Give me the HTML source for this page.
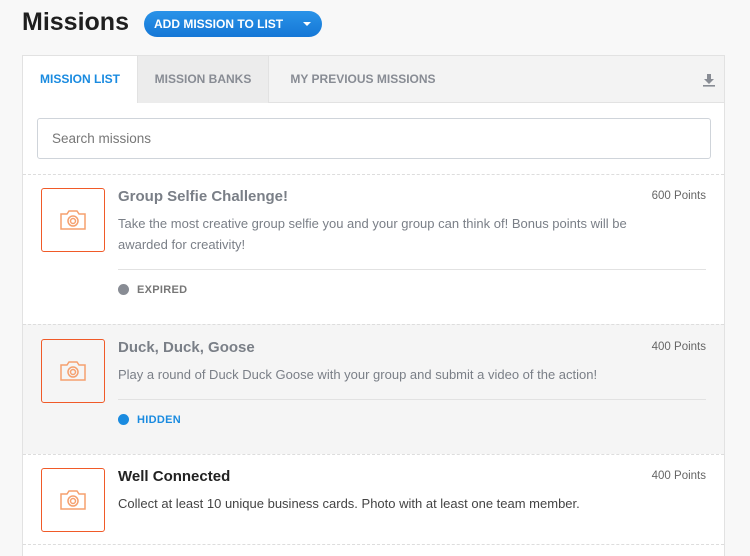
<!DOCTYPE html>
<html><head><style>
*{box-sizing:border-box;margin:0;padding:0}
html,body{width:750px;height:556px;overflow:hidden}
body{background:#f8f8f8;font-family:"Liberation Sans",sans-serif;position:relative}
h1{position:absolute;left:22px;top:8px;font-size:25px;font-weight:bold;color:#1f1f1f}
.btn{position:absolute;left:144px;top:11px;width:178px;height:26px;border-radius:13px;background:linear-gradient(#2a93e8,#1577d6);color:#fff;font-size:12px;font-weight:bold;line-height:26px;padding-left:10px}
.btn:after{content:"";position:absolute;right:11px;top:11px;border:4px solid transparent;border-top:4px solid #fff;border-bottom:0}
.panel{position:absolute;left:22px;top:55px;width:703px;height:501px;background:#fff;border:1px solid #e2e2e2;border-bottom:0;overflow:hidden}
.tabs{height:47px;background:#f3f3f3;border-bottom:1px solid #e2e2e2;position:relative}
.tab{position:absolute;top:0;height:47px;line-height:47px;font-size:12px;font-weight:bold;color:#888c94;text-align:center}
.search{position:absolute;left:14px;top:62px;width:674px;height:41px;border:1px solid #cfd4da;border-radius:3px;font-size:13.5px;color:#777;padding:12px 14px}
.item{position:absolute;left:0;width:701px;border-top:1px dashed #ddd}
.ico{position:absolute;left:18px;width:64px;height:64px;border:1.5px solid #f05a28;border-radius:3px;display:flex;align-items:center;justify-content:center}
.t{position:absolute;left:95px;font-size:15px;font-weight:bold}
.p{position:absolute;right:18px;font-size:11.5px;color:#666}
.d{position:absolute;left:95px;width:550px;font-size:13px;line-height:21px;color:#7a7f87}
.hr{position:absolute;left:95px;right:18px;border-top:1px solid #e2e2e2}
.st{position:absolute;left:95px;font-size:11px;font-weight:bold;letter-spacing:.3px}
.st i{display:inline-block;width:11px;height:11px;border-radius:50%;vertical-align:-2px;margin-right:8px}
</style></head><body>
<h1>Missions</h1>
<div class="btn">ADD MISSION TO LIST</div>
<div class="panel">
<div class="tabs">
<div class="tab" style="left:0;width:114px;background:#fff;color:#1a8be0;height:48px">MISSION LIST</div>
<div class="tab" style="left:114px;width:132px;background:#ececec;border-left:1px solid #e2e2e2;border-right:1px solid #e2e2e2">MISSION BANKS</div>
<div class="tab" style="left:250px;width:180px">MY PREVIOUS MISSIONS</div>
<svg style="position:absolute;right:9px;top:17px" width="12" height="14" viewBox="0 0 12 14"><path d="M4 1h4v5h3L6 11 1 6h3z" fill="#888c94"/><rect x="0" y="12" width="12" height="1.6" fill="#888c94"/></svg>
</div>
<div class="search">Search missions</div>

<div class="item" style="top:118px;height:150px;background:#fff">
<div class="ico" style="top:13px"><svg width="30" height="24" viewBox="0 0 30 24" fill="none" stroke="#f5a06e" stroke-width="1.5"><path d="M3 6h6l2-3h8l2 3h6v15H3z"/><circle cx="15" cy="13" r="5"/><circle cx="15" cy="13" r="2.5"/></svg></div>
<div class="t" style="top:13px;color:#7a7f87">Group Selfie Challenge!</div>
<div class="p" style="top:15px">600 Points</div>
<div class="d" style="top:38px">Take the most creative group selfie you and your group can think of! Bonus points will be awarded for creativity!</div>
<div class="hr" style="top:94px"></div>
<div class="st" style="top:109px;color:#777"><i style="background:#888c94"></i>EXPIRED</div>
</div>

<div class="item" style="top:268px;height:130px;background:#f5f5f5">
<div class="ico" style="top:14px"><svg width="30" height="24" viewBox="0 0 30 24" fill="none" stroke="#f5a06e" stroke-width="1.5"><path d="M3 6h6l2-3h8l2 3h6v15H3z"/><circle cx="15" cy="13" r="5"/><circle cx="15" cy="13" r="2.5"/></svg></div>
<div class="t" style="top:14px;color:#7a7f87">Duck, Duck, Goose</div>
<div class="p" style="top:16px">400 Points</div>
<div class="d" style="top:39px;width:600px">Play a round of Duck Duck Goose with your group and submit a video of the action!</div>
<div class="hr" style="top:74px"></div>
<div class="st" style="top:89px;color:#1a8be0"><i style="background:#1a8be0"></i>HIDDEN</div>
</div>

<div class="item" style="top:398px;height:100px;background:#fff">
<div class="ico" style="top:13px"><svg width="30" height="24" viewBox="0 0 30 24" fill="none" stroke="#f5a06e" stroke-width="1.5"><path d="M3 6h6l2-3h8l2 3h6v15H3z"/><circle cx="15" cy="13" r="5"/><circle cx="15" cy="13" r="2.5"/></svg></div>
<div class="t" style="top:13px;color:#222">Well Connected</div>
<div class="p" style="top:15px">400 Points</div>
<div class="d" style="top:38px;color:#444;width:600px">Collect at least 10 unique business cards. Photo with at least one team member.</div>
</div>
<div class="item" style="top:488px;height:30px"></div>
</div>
</body></html>
